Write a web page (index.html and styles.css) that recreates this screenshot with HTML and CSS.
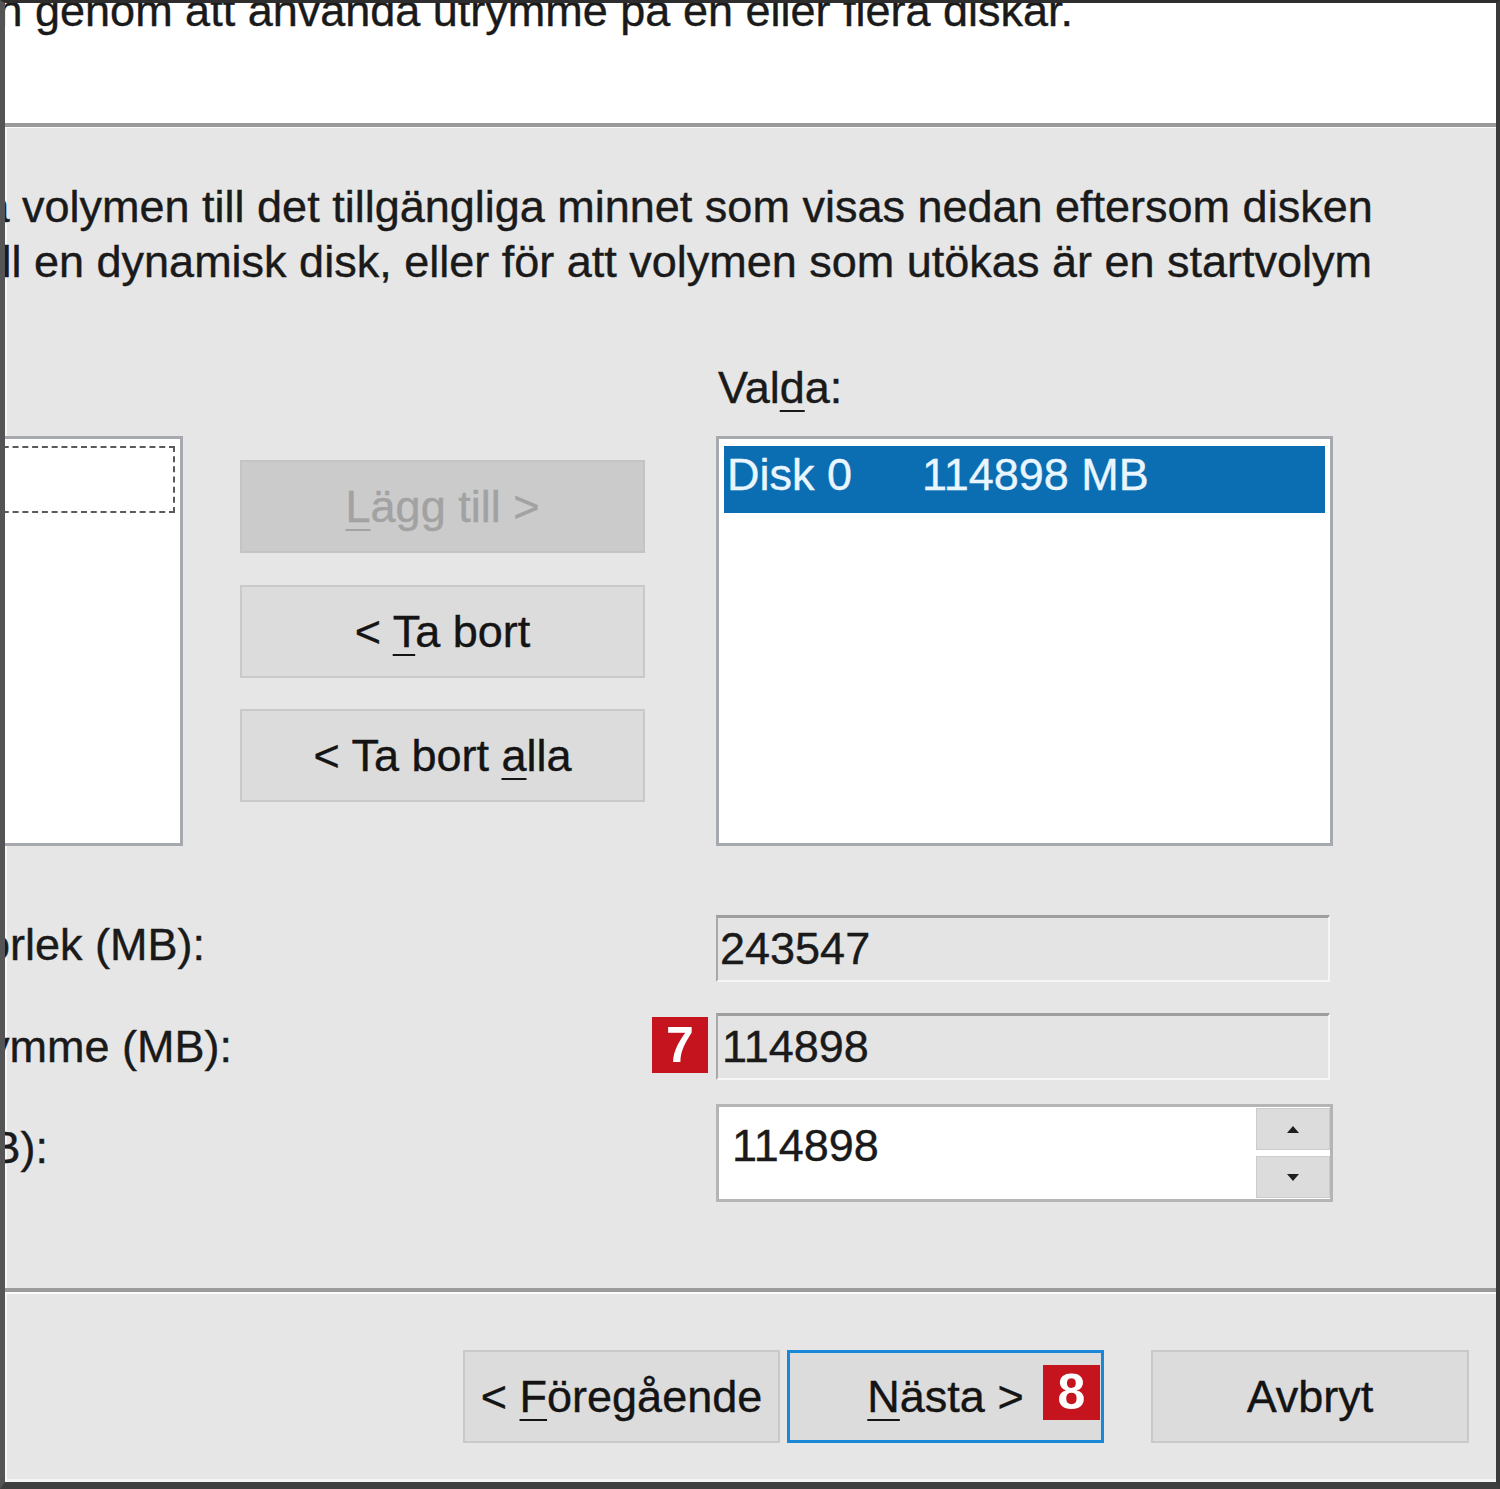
FILE: index.html
```html
<!DOCTYPE html>
<html lang="sv">
<head>
<meta charset="utf-8">
<title>Guiden Utöka volym</title>
<link rel="stylesheet" href="styles.css">
</head>
<body>
<div class="window">
  <header class="header">
    <p class="intro">n genom att använda utrymme på en eller flera diskar.</p>
  </header>
  <div class="rule rule-top"></div>
  <main class="main">
    <div class="desc">
      <p class="desc-line line-1">a volymen till det tillgängliga minnet som visas nedan eftersom disken</p>
      <p class="desc-line line-2">ll en dynamisk disk, eller för att volymen som utökas är en startvolym</p>
    </div>
    <section class="picker">
      <div class="picker-label">Val<u>d</u>a:</div>
      <div class="listbox listbox-left">
        <div class="focus-item"></div>
      </div>
      <div class="move-buttons">
        <button class="btn btn-disabled" type="button"><u>L</u>ägg till &gt;</button>
        <button class="btn" type="button">&lt; <u>T</u>a bort</button>
        <button class="btn" type="button">&lt; Ta bort <u>a</u>lla</button>
      </div>
      <div class="listbox listbox-right">
        <div class="list-item selected"><span>Disk 0</span><span>114898 MB</span></div>
      </div>
    </section>
    <section class="sizes">
      <div class="size-row row-1">
        <div class="size-label label-1">orlek (MB):</div>
        <div class="field">243547</div>
      </div>
      <div class="size-row row-2">
        <div class="size-label label-2">ymme (MB):</div>
        <div class="field field-max">114898<span class="badge badge-7">7</span></div>
      </div>
      <div class="size-row row-3">
        <div class="size-label label-3">B):</div>
        <div class="spin">
          <div class="spin-value">114898</div>
          <div class="spin-buttons">
            <div class="spin-btn"><span class="arrow arrow-up"></span></div>
            <div class="spin-btn"><span class="arrow arrow-down"></span></div>
          </div>
        </div>
      </div>
    </section>
  </main>
  <div class="rule rule-bottom"></div>
  <footer class="footer">
    <button class="btn nav" type="button">&lt; <u>F</u>öregående</button>
    <button class="btn nav nav-default" type="button"><u>N</u>ästa &gt;<span class="badge badge-8">8</span></button>
    <button class="btn nav nav-cancel" type="button">Avbryt</button>
  </footer>
</div>
</body>
</html>
```

FILE: styles.css
```css
* {
  box-sizing: border-box;
}

html,
body {
  margin: 0;
  padding: 0;
}

body {
  background: #3a3a3a;
  font-family: "Liberation Sans", Arial, sans-serif;
  color: #1a1a1a;
}

.window {
  width: 1500px;
  height: 1489px;
  border-top: 3px solid #2e2e2e;
  border-left: 5px solid #545454;
  border-right: 4px solid #3a3a3a;
  border-bottom: 7px solid #3e3e3e;
  background: #e6e6e6;
  overflow: hidden;
  display: flex;
  flex-direction: column;
  font-size: 45px;
  line-height: 55px;
  -webkit-text-stroke: 0.4px currentColor;
}

p {
  margin: 0;
}

u {
  text-decoration-thickness: 2px;
  text-underline-offset: 7px;
}

/* header */
.header {
  flex: none;
  height: 120px;
  background: #ffffff;
  overflow: hidden;
}

.intro {
  margin: -20px 0 0 -7.5px;
  white-space: nowrap;
}

.rule {
  flex: none;
  border-top: 4px solid #9b9b9b;
}

.rule-top {
  border-bottom: 1px solid #fbfbfb;
}

.rule-bottom {
  border-bottom: 2px solid #fbfbfb;
}

/* main */
.main {
  flex: none;
  height: 1160px;
  padding-top: 51px;
  box-shadow: inset 2px 0 0 #f7f7f7;
}

.desc-line {
  white-space: nowrap;
}

.line-1 {
  margin-left: -20.5px;
}

.line-2 {
  margin-left: -3.5px;
}

/* picker */
.picker {
  display: grid;
  grid-template-columns: 198px 405px 631px;
  grid-template-rows: 76px 410px;
  column-gap: 57px;
  margin: 71px 0 0 -20px;
}

.picker-label {
  grid-column: 3;
  grid-row: 1;
  margin-left: 16px;
}

.listbox {
  grid-row: 2;
  background: #ffffff;
  border: 3px solid #a6aaae;
  padding: 7px 5px;
}

.listbox-left {
  grid-column: 1;
}

.focus-item {
  height: 67px;
  border: 2px dashed #5a5a5a;
}

.listbox-right {
  grid-column: 3;
  margin-left: 14px;
}

.list-item {
  height: 67px;
  line-height: 57px;
  padding-left: 3px;
  display: grid;
  grid-template-columns: 195px auto;
}

.list-item.selected {
  background: #0b6db2;
  color: #e9f6ff;
}

.move-buttons {
  grid-column: 2;
  grid-row: 2;
  padding-top: 24px;
  display: flex;
  flex-direction: column;
  gap: 31.5px;
}

/* buttons */
.btn {
  position: relative;
  height: 93px;
  padding: 0;
  margin: 0;
  border: 2px solid #c9c9c9;
  background: #dcdcdc;
  color: #141414;
  font-family: inherit;
  font-size: 45px;
  line-height: 89px;
  text-align: center;
  white-space: nowrap;
  -webkit-text-stroke: 0.4px currentColor;
}

.btn-disabled {
  background: #cbcbcb;
  border-color: #c4c4c4;
  color: #a2a2a2;
}

/* sizes */
.sizes {
  margin-top: 69px;
  padding-right: 163px;
}

.size-row {
  display: flex;
  align-items: center;
}

.row-1,
.row-2 {
  height: 67px;
}

.row-2 {
  margin-top: 31px;
}

.row-3 {
  height: 98px;
  margin-top: 24px;
}

.size-label {
  flex: 1;
  white-space: nowrap;
}

.label-1 {
  margin-left: -20px;
  margin-bottom: 8px;
}

.label-2 {
  margin-left: -18px;
}

.label-3 {
  margin-left: -14.5px;
  margin-bottom: 12px;
}

.field {
  position: relative;
  flex: none;
  width: 614px;
  height: 67px;
  margin-right: 3px;
  border-top: 3px solid #9e9e9e;
  border-left: 2px solid #a9a9a9;
  border-right: 2px solid #f6f6f6;
  border-bottom: 2px solid #f6f6f6;
  background: #e4e4e4;
  padding-left: 2px;
  line-height: 62px;
}

.field-max {
  padding-left: 4px;
}

.spin {
  flex: none;
  width: 617px;
  height: 98px;
  border: 3px solid #b3b5b7;
  background: #ffffff;
  display: flex;
}

.spin-value {
  flex: 1;
  padding-left: 13px;
  line-height: 78px;
}

.spin-buttons {
  flex: none;
  width: 74px;
  padding: 1px 0;
  display: flex;
  flex-direction: column;
  gap: 6px;
}

.spin-btn {
  flex: 1;
  background: #dcdcdc;
  border: 1px solid #cccccc;
  display: flex;
  align-items: center;
  justify-content: center;
}

.arrow {
  width: 0;
  height: 0;
  border-left: 6px solid transparent;
  border-right: 6px solid transparent;
}

.arrow-up {
  border-bottom: 7px solid #1e1e1e;
}

.arrow-down {
  border-top: 7px solid #1e1e1e;
}

/* badges */
.badge {
  position: absolute;
  background: #c6141f;
  color: #ffffff;
  font-family: "Liberation Sans", Arial, sans-serif;
  font-weight: bold;
  font-size: 50px;
  text-align: center;
  -webkit-text-stroke: 0;
}

.badge-7 {
  left: -66px;
  top: 1px;
  width: 56px;
  height: 56px;
  line-height: 56px;
}

.badge-8 {
  right: 1px;
  top: 12px;
  width: 57px;
  height: 55px;
  line-height: 55px;
}

/* footer */
.footer {
  flex: 1;
  display: flex;
  align-items: flex-start;
  padding: 56px 0 0 458px;
  box-shadow: inset 2px 0 0 #f7f7f7, inset 0 -3px 0 #f5f5f5;
}

.nav {
  width: 317px;
}

.nav-default {
  margin-left: 7px;
  border: 3px solid #1a88d6;
  line-height: 87px;
}

.nav-cancel {
  width: 318px;
  margin-left: 47px;
}
```
